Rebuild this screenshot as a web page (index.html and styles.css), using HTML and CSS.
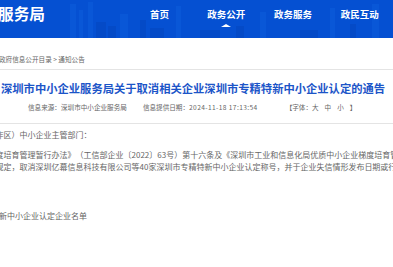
FILE: index.html
```html
<!DOCTYPE html>
<html lang="zh-CN">

<head>
  <meta charset="UTF-8">
  <meta name="viewport" content="width=device-width, initial-scale=1.0">
  <title>深圳市中小企业服务局</title>
  <link rel="stylesheet" href="styles.css">
</head>

<body>
  <header class="header">
    <svg class="skyline" width="393" height="38" viewBox="0 0 393 38" aria-hidden="true">
      <g fill="#0d5ddc" opacity="0.55">
        <rect x="70" y="4" width="6" height="34"/>
        <rect x="79" y="10" width="4" height="28"/>
        <rect x="88" y="2" width="5" height="36"/>
        <rect x="120" y="14" width="8" height="24"/>
        <rect x="176" y="6" width="5" height="32"/>
        <rect x="260" y="12" width="6" height="26"/>
        <rect x="330" y="8" width="5" height="30"/>
        <rect x="372" y="4" width="7" height="34"/>
      </g>
      <g fill="#0446bd" opacity="0.5">
        <rect x="96" y="22" width="10" height="16"/>
        <rect x="108" y="26" width="8" height="12"/>
        <rect x="140" y="20" width="6" height="18"/>
        <rect x="150" y="28" width="14" height="10"/>
        <rect x="200" y="30" width="20" height="8"/>
        <rect x="236" y="26" width="8" height="12"/>
        <rect x="300" y="30" width="18" height="8"/>
        <rect x="350" y="24" width="6" height="14"/>
      </g>
    </svg>
    <div class="logo">服务局</div>
    <nav class="nav">
      <a class="nav-item">首页</a>
      <a class="nav-item active">政务公开</a>
      <a class="nav-item">政务服务</a>
      <a class="nav-item">政民互动</a>
    </nav>
  </header>

  <div class="crumbs">政府信息公开目录 &gt; 通知公告</div>

  <div class="article-head">
    <h1 class="title">深圳市中小企业服务局关于取消相关企业深圳市专精特新中小企业认定的通告</h1>
    <div class="meta">
      <span>信息来源：深圳市中小企业服务局</span>
      <span>信息提供日期：<span class="date">2024-11-18 17:13:54</span></span>
      <span class="font-size">【字体：大 中 小 】</span>
    </div>
  </div>

  <div class="article-body">
    <p class="greeting">作区）中小企业主管部门：</p>
    <p class="para">度培育管理暂行办法》（工信部企业〔2022〕63号）第十六条及《深圳市工业和信息化局优质中小企业梯度培育管理实施细则》<br>规定，取消深圳亿幕信息科技有限公司等40家深圳市专精特新中小企业认定称号，并于企业失信情形发布日期或行政处罚决定日期起</p>
    <p class="attach">新中小企业认定企业名单</p>
  </div>
</body>

</html>
```

FILE: styles.css
```css
body {
  margin: 0;
  font-family: "Noto Sans CJK SC", "Noto Sans", sans-serif;
  background-color: #fff;
  overflow: hidden;
  text-spacing-trim: space-all;
}

.header {
  position: relative;
  display: flex;
  height: 38px;
  background-color: #0550d2;
  color: #fff;
}

.skyline {
  position: absolute;
  left: 0;
  top: 0;
}

.logo {
  position: relative;
  margin-left: -2px;
  padding-top: 5px;
  font-size: 15.7px;
  line-height: 17px;
  font-weight: bold;
  white-space: nowrap;
}

.nav {
  position: relative;
  display: flex;
  margin-left: auto;
}

.nav-item {
  display: flex;
  flex-direction: column;
  align-items: center;
  width: 66.7px;
  padding-top: 9px;
  font-size: 9.5px;
  line-height: 10px;
  font-weight: bold;
  white-space: nowrap;
}

.nav-item.active::after {
  content: "";
  margin-top: 5px;
  width: 0;
  height: 0;
  border-left: 5px solid transparent;
  border-right: 5px solid transparent;
  border-bottom: 3.5px solid #fff;
}

.crumbs {
  margin-left: -1px;
  padding: 17px 0 6px;
  font-size: 6.6px;
  line-height: 8px;
  color: #666;
  border-bottom: 1px solid #e4e4e4;
  white-space: nowrap;
}

.article-head {
  padding-bottom: 12px;
  border-bottom: 1px solid #e4e4e4;
}

.title {
  margin: 11px 0 0 1px;
  font-size: 11.3px;
  line-height: 14px;
  font-weight: bold;
  color: #1c55c8;
  white-space: nowrap;
}

.meta {
  display: flex;
  gap: 16px;
  margin: 8px 0 0 28px;
  font-size: 6.6px;
  line-height: 8px;
  color: #666;
  white-space: nowrap;
}

.meta .date {
  letter-spacing: 0.4px;
}

.meta .font-size {
  margin-left: 12px;
  word-spacing: 4.5px;
}

.article-body {
  margin-left: -4.5px;
  font-size: 8px;
  line-height: 12.7px;
  color: #666;
  white-space: nowrap;
}

.greeting {
  margin: 5.4px 0 0;
}

.para {
  margin: 6.6px 0 0;
}

.attach {
  margin: 36.3px 0 0 3.5px;
}
```
